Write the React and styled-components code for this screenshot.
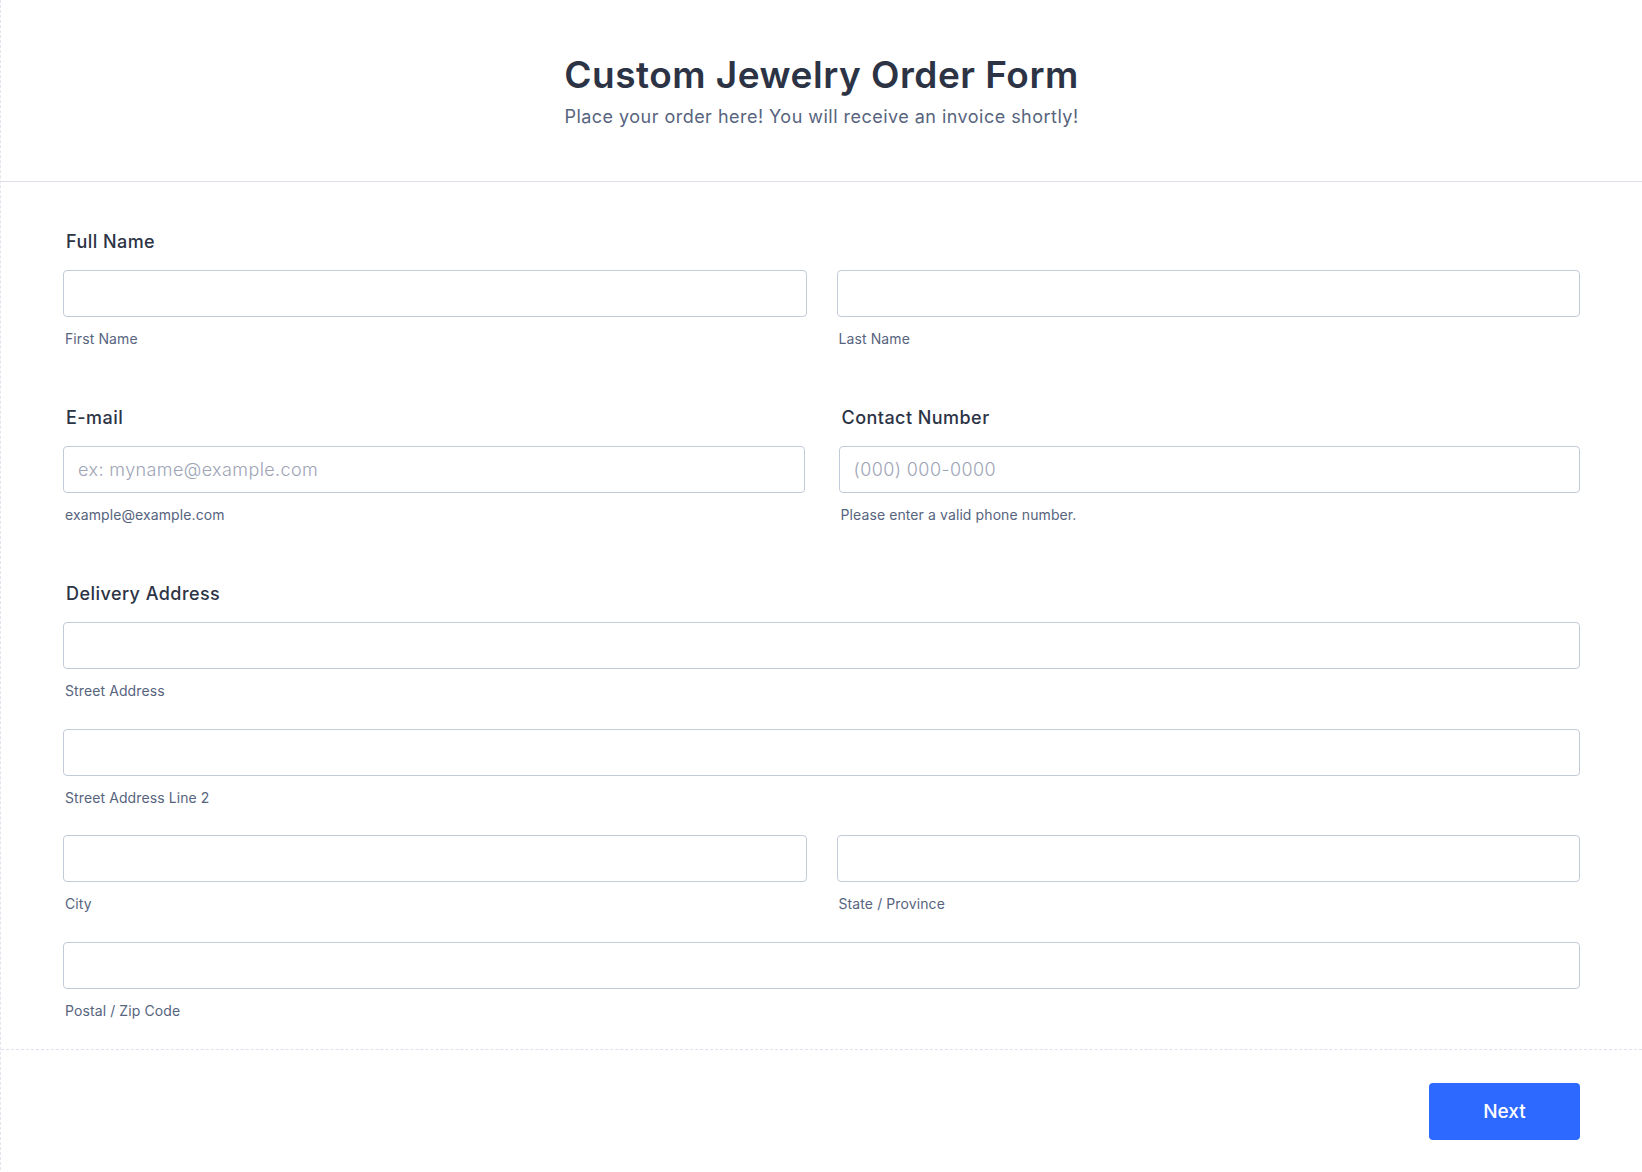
import React from 'react';
import styled, { createGlobalStyle } from 'styled-components';

const GlobalStyle = createGlobalStyle`
  * {
    box-sizing: border-box;
  }

  body {
    margin: 0;
    background: #ffffff;
    font-family: Inter, "Noto Sans", "Liberation Sans", sans-serif;
  }
`;

const Page = styled.div`
  width: 100%;
  min-height: 1172px;
  background: #ffffff;
  border-left: 1px dashed #e3e5ee;
`;

const Header = styled.header`
  padding: 53px 62px 51px;
  text-align: center;
  border-bottom: 1px solid #dcdfe9;
`;

const Title = styled.h1`
  margin: 0;
  font-size: 37px;
  line-height: 44px;
  font-weight: 600;
  letter-spacing: 0.5px;
  color: #2c3345;
`;

const SubTitle = styled.p`
  margin: 6px 0 0;
  font-size: 18px;
  line-height: 27px;
  font-weight: 400;
  letter-spacing: 0.47px;
  color: #57647e;
`;

const Body = styled.div`
  padding: 47px 62px 28px;
`;

const Section = styled.div`
  & + & {
    margin-top: 56px;
  }
`;

const Row = styled.div`
  display: grid;
  grid-template-columns: 1fr 1fr;
  column-gap: ${({ gap }) => gap}px;
`;

const Stack = styled.div`
  display: flex;
  flex-direction: column;
  gap: 27.5px;
`;

const Label = styled.div`
  padding-left: 3px;
  margin-bottom: 16px;
  font-size: 18px;
  line-height: 25px;
  font-weight: 500;
  letter-spacing: 0.45px;
  color: #2c3345;
`;

const Input = styled.input`
  display: block;
  width: 100%;
  height: 47px;
  padding: 0 14px;
  border: 1px solid #c3cad8;
  border-radius: 4px;
  background: #ffffff;
  font-family: inherit;
  font-size: 18px;
  letter-spacing: 0.4px;
  color: #2c3345;
  outline: none;

  &::placeholder {
    color: #9ea4b6;
    font-weight: 300;
  }
`;

const SubLabel = styled.div`
  margin-top: 12px;
  padding-left: 2px;
  font-size: 14px;
  line-height: 20px;
  letter-spacing: 0.1px;
  color: #57647e;
`;

const Footer = styled.footer`
  display: flex;
  justify-content: flex-end;
  padding: 33px 62px 35px;
  border-top: 1px dashed #dfe1ec;
`;

const NextButton = styled.button`
  width: 151px;
  height: 57px;
  border: none;
  border-radius: 4px;
  background: #2e69ff;
  color: #ffffff;
  font-family: inherit;
  font-size: 19px;
  font-weight: 500;
  cursor: pointer;
`;

const Field = ({ placeholder, sub }) => (
  <div>
    <Input placeholder={placeholder} />
    <SubLabel>{sub}</SubLabel>
  </div>
);

const App = () => (
  <>
    <GlobalStyle />
    <Page>
      <Header>
        <Title>Custom Jewelry Order Form</Title>
        <SubTitle>Place your order here! You will receive an invoice shortly!</SubTitle>
      </Header>
      <Body>
        <Section>
          <Label>Full Name</Label>
          <Row gap={30}>
            <Field sub="First Name" />
            <Field sub="Last Name" />
          </Row>
        </Section>
        <Section>
          <Row gap={34}>
            <div>
              <Label>E-mail</Label>
              <Field placeholder="ex: myname@example.com" sub="example@example.com" />
            </div>
            <div>
              <Label>Contact Number</Label>
              <Field placeholder="(000) 000-0000" sub="Please enter a valid phone number." />
            </div>
          </Row>
        </Section>
        <Section>
          <Label>Delivery Address</Label>
          <Stack>
            <Field sub="Street Address" />
            <Field sub="Street Address Line 2" />
            <Row gap={30}>
              <Field sub="City" />
              <Field sub="State / Province" />
            </Row>
            <Field sub="Postal / Zip Code" />
          </Stack>
        </Section>
      </Body>
      <Footer>
        <NextButton>Next</NextButton>
      </Footer>
    </Page>
  </>
);

export default App;
